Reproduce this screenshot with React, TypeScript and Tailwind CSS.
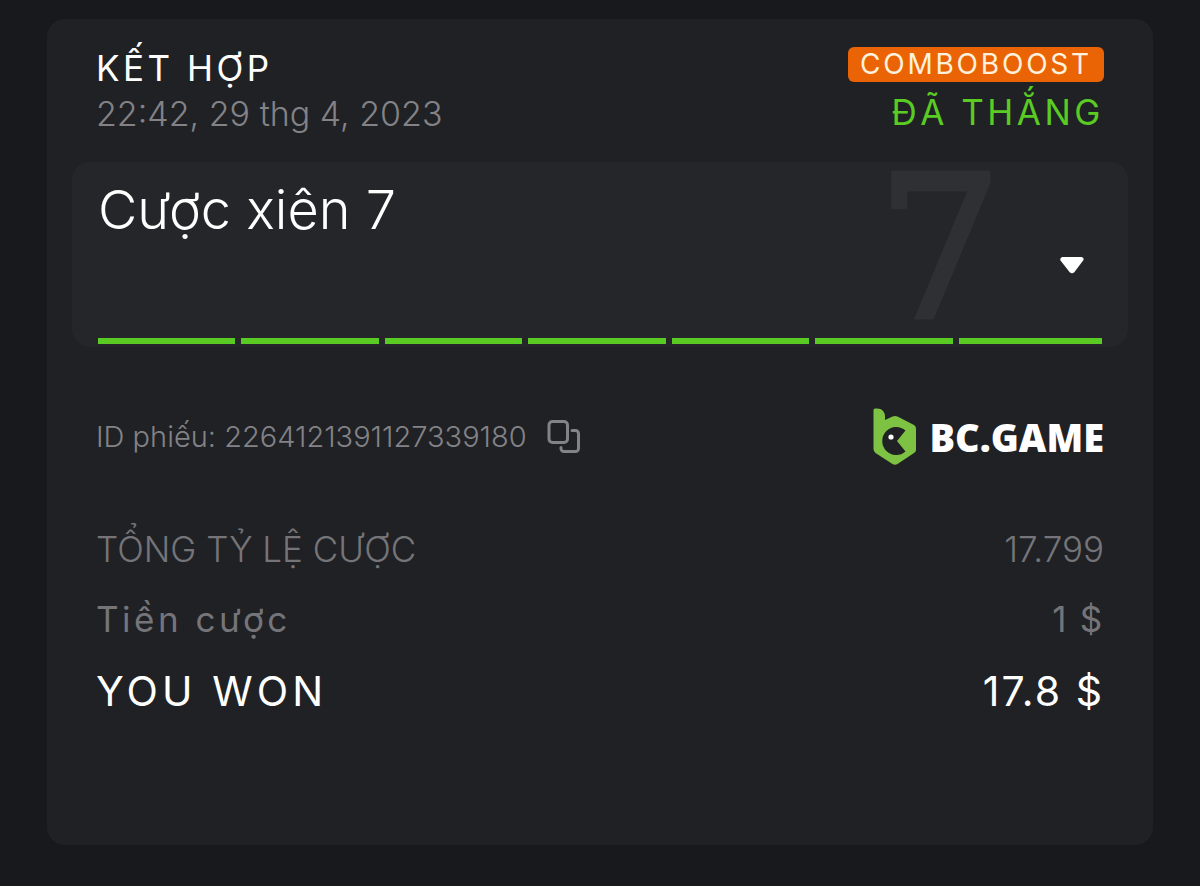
import React from 'react';

const legs = [1, 2, 3, 4, 5, 6, 7];

const totals = [
  {
    label: 'TỔNG TỶ LỆ CƯỢC',
    value: '17.799',
    row: 'h-[70px] text-[35px] font-light text-[#757579]',
    labelTracking: 'tracking-normal',
    valueTracking: 'tracking-normal',
  },
  {
    label: 'Tiền cược',
    value: '1 $',
    row: 'h-[70px] text-[35px] font-normal text-[#757579]',
    labelTracking: 'tracking-widest',
    valueTracking: 'tracking-wider',
  },
  {
    label: 'YOU WON',
    value: '17.8 $',
    row: 'h-[76px] text-[41px] font-normal text-white',
    labelTracking: 'tracking-widest',
    valueTracking: 'tracking-wider',
  },
];

const CopyIcon: React.FC = () => (
  <svg className="h-[34px] w-[34px]" viewBox="0 0 34 34" fill="none" stroke="currentColor" strokeWidth="3" strokeLinecap="round">
    <rect x="2" y="1.500" width="18.500" height="21" rx="3.500" />
    <path d="M25 10.500h3.500a3 3 0 0 1 3 3v15a3 3 0 0 1-3 3H17a3 3 0 0 1-3-3v-1" />
  </svg>
);

const BrandMark: React.FC = () => (
  <svg className="h-[58px] w-11" viewBox="0 0 44 58" aria-hidden="true">
    <path
      d="M0.500 2Q0.500 0.500 2 0.500H4C9 0.500 12 4 12 8.500V12L19.500 8.600Q22 7.500 24.500 8.600L41 17Q43 18 43 20.500V42Q43 44 41 45L24.500 56Q22 57.500 19.500 56L2.500 45Q0.500 43.500 0.500 41Z"
      fill="#7dc242"
    />
    <path d="M32.500 22.500A14 14 0 1 0 32.500 43.500L24 33Z" fill="#202125" />
    <circle cx="18" cy="29" r="2.600" fill="#fff" />
  </svg>
);

const App: React.FC = () => {
  return (
    <main className="min-h-screen bg-[#18191d] px-[47px] pt-[19px] pb-[41px] font-['Inter',sans-serif]">
      <article className="rounded-[18px] bg-[#202125] px-[25px] pt-7 pb-[115px]">
        <header className="flex justify-between px-6">
          <div>
            <h1 className="text-[35px] leading-[42px] font-normal tracking-widest text-white">KẾT HỢP</h1>
            <time dateTime="2023-04-29T22:42" className="block text-[34px] leading-[50px] font-light text-[#838387]">
              22:42, 29 thg 4, 2023
            </time>
          </div>
          <div className="flex flex-col items-end">
            <span className="rounded-md bg-[#ea6304] px-3 text-[28px] leading-[35px] font-normal tracking-widest text-[#fff1dc]">
              COMBOBOOST
            </span>
            <span className="text-[35px] leading-[60px] font-normal tracking-widest text-[#59cb23]">ĐÃ THẮNG</span>
          </div>
        </header>

        <section className="mt-5 rounded-[18px] bg-[#25262a] px-[26px] pb-[3px]">
          <div className="flex h-[176px] items-start">
            <h2 className="grow pt-4 text-[54px] leading-[64px] font-light text-white">Cược xiên 7</h2>
            <span
              className="font-['DejaVu_Serif',serif] text-[196px] leading-[174px] text-[#2f3034] [-webkit-text-stroke:5px_#2f3034]"
              aria-hidden="true"
            >
              7
            </span>
            <button type="button" aria-label="Mở rộng" className="mt-[90px] mr-4 ml-14 p-0">
              <svg className="h-7 w-7" viewBox="0 0 28 28" fill="#fff">
                <path d="M4.500 5H23.500Q26 5.500 25.500 8L16.500 20Q14 22.500 11.500 20L2.500 8.500Q1.500 6 4.500 5Z" />
              </svg>
            </button>
          </div>
          <div className="grid grid-cols-7">
            {legs.map((leg) => (
              <div key={leg} className="pr-[6px] last:pr-0">
                <div className="h-[6px] bg-[#59cb23]" />
              </div>
            ))}
          </div>
        </section>

        <div className="mt-[61px] flex items-center justify-between px-6">
          <div className="flex items-center gap-5 text-[29px] leading-[40px] font-light text-[#838387]">
            <span>ID phiếu: 2264121391127339180</span>
            <button type="button" aria-label="Sao chép">
              <CopyIcon />
            </button>
          </div>
          <div className="flex items-center gap-3">
            <BrandMark />
            <span className="font-['Open_Sans',sans-serif] text-[38px] leading-[58px] font-extrabold text-white">BC.GAME</span>
          </div>
        </div>

        <dl className="mt-12 px-6">
          {totals.map((item) => (
            <div key={item.label} className={`flex items-center justify-between ${item.row}`}>
              <dt className={item.labelTracking}>{item.label}</dt>
              <dd className={item.valueTracking}>{item.value}</dd>
            </div>
          ))}
        </dl>
      </article>
    </main>
  );
};

export default App;
